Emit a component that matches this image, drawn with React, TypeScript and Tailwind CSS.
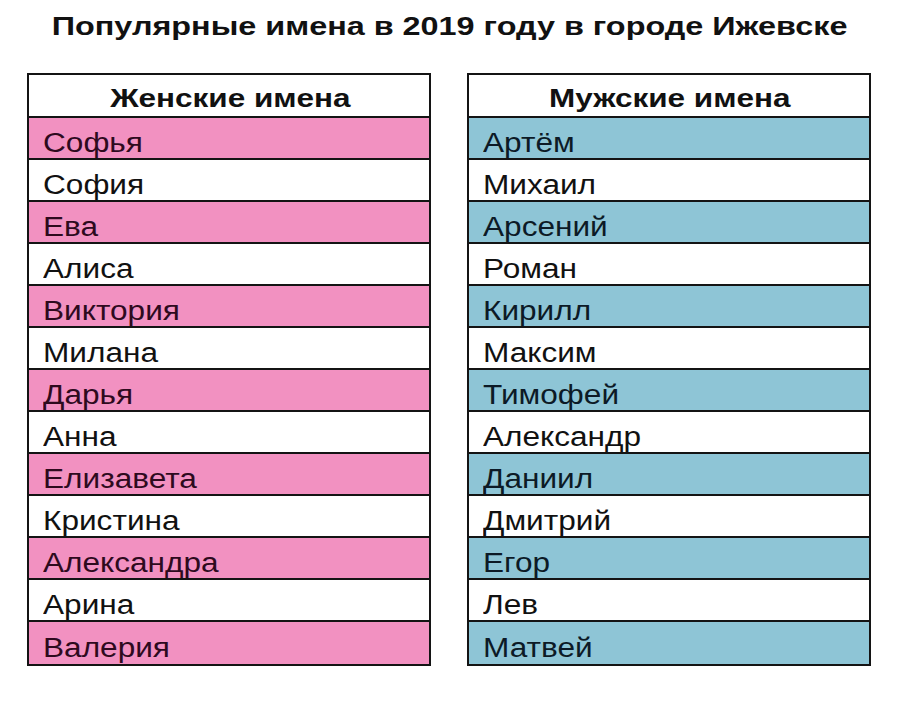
import React from "react";

const female = ["Софья","София","Ева","Алиса","Виктория","Милана","Дарья","Анна","Елизавета","Кристина","Александра","Арина","Валерия"];
const male = ["Артём","Михаил","Арсений","Роман","Кирилл","Максим","Тимофей","Александр","Даниил","Дмитрий","Егор","Лев","Матвей"];

function Table({ title, names, kind }: { title: string; names: string[]; kind: "f" | "m" }) {
  return (
    <div className="w-[404px] border-2 border-[#141414] flex flex-col">
      <div className="h-[43px] border-b-2 border-[#141414] flex items-center justify-center pt-[5px] pl-[2px] text-[26px] font-bold text-[#111] leading-none">
        <span className="inline-block scale-x-[1.21] origin-center">{title}</span>
      </div>
      {names.map((n, i) => {
        const colored = i % 2 === 0;
        const last = i === names.length - 1;
        const bg = colored
          ? kind === "f"
            ? "bg-[#f291c1] text-[#2e0a1e]"
            : "bg-[#8ec5d6] text-[#0c1a26]"
          : "bg-white text-[#111]";
        return (
          <div
            key={n}
            className={`h-[42px] flex items-center pt-[10px] pl-[14px] text-[27px] leading-none ${bg} ${last ? "" : "border-b-2 border-[#141414]"}`}
          >
            <span className="inline-block scale-x-[1.17] origin-left">{n}</span>
          </div>
        );
      })}
    </div>
  );
}

export default function App() {
  return (
    <div
      className="w-[902px] h-[708px] bg-white flex flex-col"
      style={{ fontFamily: '"Liberation Sans", Arial, sans-serif' }}
    >
      <div className="h-[73px] pt-[11px] text-[26px] font-bold text-[#111] leading-[30px] flex justify-center pr-[2px]">
        <span className="inline-block scale-x-[1.245] origin-center">
          Популярные имена в 2019 году в городе Ижевске
        </span>
      </div>
      <div className="flex gap-[36px] pl-[27px]">
        <Table title="Женские имена" names={female} kind="f" />
        <Table title="Мужские имена" names={male} kind="m" />
      </div>
    </div>
  );
}
